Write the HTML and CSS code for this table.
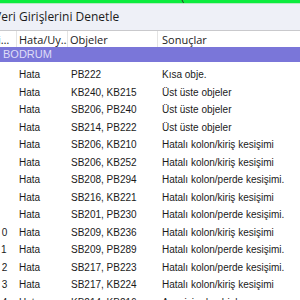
FILE: index.html
```html
<!DOCTYPE html>
<html lang="tr">
<head>
<meta charset="utf-8">
<link rel="stylesheet" href="styles.css">
</head>
<body>
<div class="win">
  <div class="topstrip">
    <svg class="mark" width="6" height="4" viewBox="0 0 6 4"><path d="M1 0 Q2 3 4 4" fill="none" stroke="#2a3a2a" stroke-width="1"/></svg>
  </div>
  <div class="titlebar">Veri Girişlerini Denetle</div>
  <div class="grid">
    <div class="hdr">
      <div class="c c1">Si…</div>
      <div class="c c2">Hata/Uy…</div>
      <div class="c c3">Objeler</div>
      <div class="c c4">Sonuçlar</div>
    </div>
    <div class="group">BODRUM</div>
    <div class="rows">
      <div class="row"><div class="c c1">1</div><div class="c c2">Hata</div><div class="c c3">PB222</div><div class="c c4">Kısa obje.</div></div>
      <div class="row"><div class="c c1">2</div><div class="c c2">Hata</div><div class="c c3">KB240, KB215</div><div class="c c4">Üst üste objeler</div></div>
      <div class="row"><div class="c c1">3</div><div class="c c2">Hata</div><div class="c c3">SB206, PB240</div><div class="c c4">Üst üste objeler</div></div>
      <div class="row"><div class="c c1">4</div><div class="c c2">Hata</div><div class="c c3">SB214, PB222</div><div class="c c4">Üst üste objeler</div></div>
      <div class="row"><div class="c c1">5</div><div class="c c2">Hata</div><div class="c c3">SB206, KB210</div><div class="c c4">Hatalı kolon/kiriş kesişimi</div></div>
      <div class="row"><div class="c c1">6</div><div class="c c2">Hata</div><div class="c c3">SB206, KB252</div><div class="c c4">Hatalı kolon/kiriş kesişimi</div></div>
      <div class="row"><div class="c c1">7</div><div class="c c2">Hata</div><div class="c c3">SB208, PB294</div><div class="c c4">Hatalı kolon/perde kesişimi.</div></div>
      <div class="row"><div class="c c1">8</div><div class="c c2">Hata</div><div class="c c3">SB216, KB221</div><div class="c c4">Hatalı kolon/kiriş kesişimi</div></div>
      <div class="row"><div class="c c1">9</div><div class="c c2">Hata</div><div class="c c3">SB201, PB230</div><div class="c c4">Hatalı kolon/perde kesişimi.</div></div>
      <div class="row"><div class="c c1">10</div><div class="c c2">Hata</div><div class="c c3">SB209, KB236</div><div class="c c4">Hatalı kolon/kiriş kesişimi</div></div>
      <div class="row"><div class="c c1">11</div><div class="c c2">Hata</div><div class="c c3">SB209, PB289</div><div class="c c4">Hatalı kolon/perde kesişimi.</div></div>
      <div class="row"><div class="c c1">12</div><div class="c c2">Hata</div><div class="c c3">SB217, PB223</div><div class="c c4">Hatalı kolon/perde kesişimi.</div></div>
      <div class="row"><div class="c c1">13</div><div class="c c2">Hata</div><div class="c c3">SB217, KB224</div><div class="c c4">Hatalı kolon/kiriş kesişimi</div></div>
      <div class="row"><div class="c c1">14</div><div class="c c2">Hata</div><div class="c c3">KB214, KB216</div><div class="c c4">Aynı isimde objeler</div></div>
    </div>
  </div>
</div>
</body>
</html>
```
FILE: styles.css
```css
html, body {
  margin: 0;
  padding: 0;
  width: 300px;
  height: 300px;
  overflow: hidden;
  background: #ffffff;
}
.win {
  margin-left: -6px;
  width: 320px;
}
.topstrip {
  height: 3px;
  background: #0cec3e;
  border-bottom: 1px solid #b9e8c4;
  display: flex;
  padding-left: 187px;
  overflow: hidden;
}
.mark { display: block; }
.titlebar {
  height: 26px;
  background: #eef0f7;
  border-bottom: 1px solid #c9c9cc;
  font-family: "Open Sans", "Noto Sans", sans-serif;
  font-size: 12px;
  color: #1b1b1b;
  line-height: 25px;
  white-space: nowrap;
}
.grid {
  font-family: "Liberation Sans", Arial, sans-serif;
  font-size: 10px;
  color: #1a1a1a;
}
.hdr {
  display: flex;
  height: 16px;
  background: #ffffff;
  font-family: "Open Sans", "Noto Sans", sans-serif;
  font-size: 11px;
  line-height: 17px;
  color: #222;
}
.hdr .c { border-right: 1px solid #e4e4e4; padding-left: 2px; }
.hdr .c1 { padding-left: 0; text-indent: -2px; }
.hdr .c4 { border-right: none; padding-left: 4px; }
.c { white-space: nowrap; overflow: hidden; box-sizing: border-box; }
.c1 { width: 23px; }
.c2 { width: 51px; }
.c3 { width: 90px; }
.c4 { flex: 1; }
.group {
  height: 15px;
  background: #7a76d9;
  color: #dedcf7;
  font-family: "Liberation Sans", Arial, sans-serif;
  font-size: 11px;
  line-height: 15px;
  padding-left: 9px;
}
.rows {
  padding-top: 4px;
}
.row {
  display: flex;
  height: 17.54px;
  line-height: 17.54px;
}
.row .c1 { padding-left: 0; letter-spacing: 2.1px; }
.row .c2 { padding-left: 2px; }
.row .c3 { padding-left: 3px; }
.row .c4 { padding-left: 4px; }
```
